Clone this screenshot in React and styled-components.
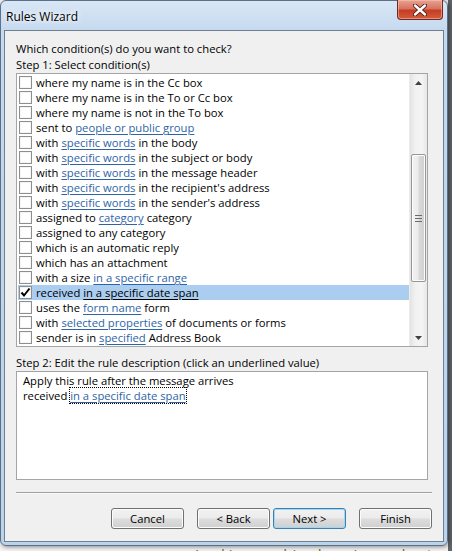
import React from 'react';
import styled, { createGlobalStyle } from 'styled-components';

const GlobalStyle = createGlobalStyle`
	html, body {
		margin: 0;
		padding: 0;
	}
	body {
		width: 452px;
		height: 551px;
		overflow: hidden;
		background: linear-gradient(90deg, #f3f3f3 0, #f3f3f3 448px, #5f6468 448px);
		font-family: "Open Sans", "Noto Sans", sans-serif;
		font-size: 11.25px;
		color: #000;
	}
`;

const Window = styled.div`
	width: 448px;
	height: 546px;
	box-sizing: border-box;
	display: flex;
	flex-direction: column;
	padding: 0 3px 3px 3px;
	border: 1px solid #5b6f86;
	border-radius: 6px;
	background: linear-gradient(180deg, #d9e7f6 0, #c5d9ef 30px, #bcd3ec 100%);
	box-shadow: 1px 1px 4px rgba(0, 0, 0, 0.45);
`;

const TitleBar = styled.div`
	height: 29px;
	display: flex;
	justify-content: space-between;
	align-items: flex-start;
	flex-shrink: 0;
`;

const Title = styled.div`
	padding: 8px 0 0 2px;
	font-size: 12px;
	line-height: 15px;
	color: #000;
	text-shadow: 0 0 8px #fff, 0 0 4px #fff;
`;

const CloseButton = styled.div`
	width: 46px;
	height: 20px;
	margin: -1px 1px 0 0;
	box-sizing: border-box;
	border: 1px solid #6a2b22;
	border-top: none;
	border-radius: 0 0 4px 4px;
	background: linear-gradient(180deg, #e9a493 0, #d7735f 45%, #c43d24 55%, #d55b3c 100%);
	box-shadow: inset 0 0 0 1px rgba(255, 200, 190, 0.5);
	display: flex;
	align-items: center;
	justify-content: center;
`;

const Client = styled.div`
	flex: 1;
	display: flex;
	flex-direction: column;
	background: #f0f0f0;
	border: 1px solid #6f7f91;
	padding: 10px 11px 0 11px;
`;

const Label = styled.div`
	line-height: 15px;
	white-space: nowrap;
	margin-bottom: ${p => p.$gap || 0}px;
`;

const Box = styled.div`
	position: relative;
	box-sizing: border-box;
	height: ${p => p.$h}px;
	margin-right: 4px;
	background: #fff;
	border: 1px solid #a5a5a5;
	overflow: hidden;
`;

const ListBox = styled(Box)`
	display: flex;
	margin-bottom: 8px;
`;

const Rows = styled.div`
	flex: 1;
	padding: 1px 0 0 1px;
	overflow: hidden;
`;

const Row = styled.div`
	height: 15px;
	display: flex;
	align-items: center;
	white-space: nowrap;
	background: ${p => (p.$selected ? '#aacdf0' : 'transparent')};
`;

const Check = styled.span`
	width: 13px;
	height: 13px;
	box-sizing: border-box;
	margin: 0 4px 0 1px;
	flex-shrink: 0;
	border: 1px solid #8f8f8f;
	background: #fff;
	box-shadow: inset 0 0 0 1px #f4f4f4;
	display: flex;
	align-items: center;
	justify-content: center;
`;

const Link = styled.span`
	color: ${p => (p.$plain ? '#000' : '#2e64a6')};
	text-decoration: underline;
	text-underline-offset: 2px;
	outline: ${p => (p.$focus ? '1px dotted #000' : 'none')};
`;

const ScrollBar = styled.div`
	width: 17px;
	flex-shrink: 0;
	display: flex;
	flex-direction: column;
	background: linear-gradient(90deg, #e3e3e3 0, #f1f1f1 30%, #f4f4f4 70%, #e8e8e8 100%);
	border-left: 1px solid #ececec;
`;

const Arrow = styled.div`
	height: 17px;
	display: flex;
	align-items: center;
	justify-content: center;
`;

const Track = styled.div`
	flex: 1;
	padding: ${p => p.$before}px 0 ${p => p.$after}px 0;
	display: flex;
	flex-direction: column;
`;

const Thumb = styled.div`
	flex: 1;
	margin: 0 1px;
	border: 1px solid #979797;
	border-radius: 2px;
	background: linear-gradient(90deg, #f3f3f3 0, #ebebeb 45%, #d9d9d9 55%, #cfcfcf 100%);
	box-shadow: inset 0 0 0 1px #fbfbfb;
	display: flex;
	align-items: center;
	justify-content: center;
`;

const Desc = styled(Box)`
	padding: 1px 6px;
	line-height: 15px;
`;

const Separator = styled.div`
	height: 0;
	margin: 12px 0 14px 0;
	border-top: 1px solid #a0a0a0;
	border-bottom: 1px solid #fbfbfb;
`;

const Buttons = styled.div`
	display: flex;
	justify-content: flex-end;
`;

const Button = styled.div`
	width: 73px;
	height: 21px;
	box-sizing: border-box;
	margin-left: ${p => p.$gap}px;
	border: 1px solid ${p => (p.$focus ? '#3c7fb1' : '#707070')};
	border-radius: 3px;
	background: linear-gradient(180deg, #f2f2f2 0, #ebebeb 49%, #dddddd 51%, #cfcfcf 100%);
	box-shadow: inset 0 0 0 1px ${p => (p.$focus ? '#9fd8f4' : '#fcfcfc')};
	display: flex;
	align-items: center;
	justify-content: center;
	line-height: 15px;
`;

const Behind = styled.div`
	width: 257px;
	overflow: hidden;
	padding-left: 195px;
	margin-top: -2px;
	font-size: 15px;
	line-height: 20px;
	color: #3d7a25;
	white-space: nowrap;
`;

const conditions = [
	['where my name is in the Cc box'],
	['where my name is in the To or Cc box'],
	['where my name is not in the To box'],
	['sent to ', 'people or public group'],
	['with ', 'specific words', ' in the body'],
	['with ', 'specific words', ' in the subject or body'],
	['with ', 'specific words', ' in the message header'],
	['with ', 'specific words', " in the recipient's address"],
	['with ', 'specific words', " in the sender's address"],
	['assigned to ', 'category', ' category'],
	['assigned to any category'],
	['which is an automatic reply'],
	['which has an attachment'],
	['with a size ', 'in a specific range'],
	['received ', 'in a specific date span'],
	['uses the ', 'form name', ' form'],
	['with ', 'selected properties', ' of documents or forms'],
	['sender is in ', 'specified', ' Address Book'],
];

const CheckMark = () => (
	<svg width="11" height="11" viewBox="0 0 11 11">
		<path d="M1.5 5.5 L4 8.5 L9.5 1.5" fill="none" stroke="#000" strokeWidth="2" />
	</svg>
);

const Triangle = ({ up }) => (
	<svg width="7" height="4" viewBox="0 0 7 4">
		<path d={up ? 'M0 4 L3.5 0 L7 4 Z' : 'M0 0 L3.5 4 L7 0 Z'} fill="#404040" />
	</svg>
);

const Grip = () => (
	<svg width="7" height="7" viewBox="0 0 7 7">
		<path d="M0 0.5 H7 M0 3.5 H7 M0 6.5 H7" stroke="#6a6a6a" strokeWidth="1" />
	</svg>
);

const App = () => {
	return (
		<>
			<GlobalStyle />
			<Window>
				<TitleBar>
					<Title>Rules Wizard</Title>
					<CloseButton>
						<svg width="14" height="12" viewBox="0 0 14 12">
							<path d="M2 1.5 L12 10.5 M12 1.5 L2 10.5" stroke="#4a1a12" strokeWidth="4.2" strokeLinecap="round" />
							<path d="M2 1.5 L12 10.5 M12 1.5 L2 10.5" stroke="#fff" strokeWidth="2.4" strokeLinecap="round" />
						</svg>
					</CloseButton>
				</TitleBar>
				<Client>
					<Label $gap={1}>Which condition(s) do you want to check?</Label>
					<Label $gap={1}>Step 1: Select condition(s)</Label>
					<ListBox $h={274}>
						<Rows>
							{conditions.map((c, i) => {
								const selected = i === 14;
								return (
									<Row key={i} $selected={selected}>
										<Check>{selected && <CheckMark />}</Check>
										<span>
											{c[0]}
											{c[1] && <Link $plain={selected}>{c[1]}</Link>}
											{c[2]}
										</span>
									</Row>
								);
							})}
						</Rows>
						<ScrollBar>
							<Arrow><Triangle up /></Arrow>
							<Track $before={63} $after={47}>
								<Thumb><Grip /></Thumb>
							</Track>
							<Arrow><Triangle /></Arrow>
						</ScrollBar>
					</ListBox>
					<Label $gap={1}>Step 2: Edit the rule description (click an underlined value)</Label>
					<Desc $h={109}>
						<div>Apply this rule after the message arrives</div>
						<div>received <Link $focus>in a specific date span</Link></div>
					</Desc>
					<Separator />
					<Buttons>
						<Button $gap={0}>Cancel</Button>
						<Button $gap={13}>&lt; Back</Button>
						<Button $gap={3} $focus>Next &gt;</Button>
						<Button $gap={13}>Finish</Button>
					</Buttons>
				</Client>
			</Window>
			<Behind>Looking machine learning and natu</Behind>
		</>
	);
};

export default App;
